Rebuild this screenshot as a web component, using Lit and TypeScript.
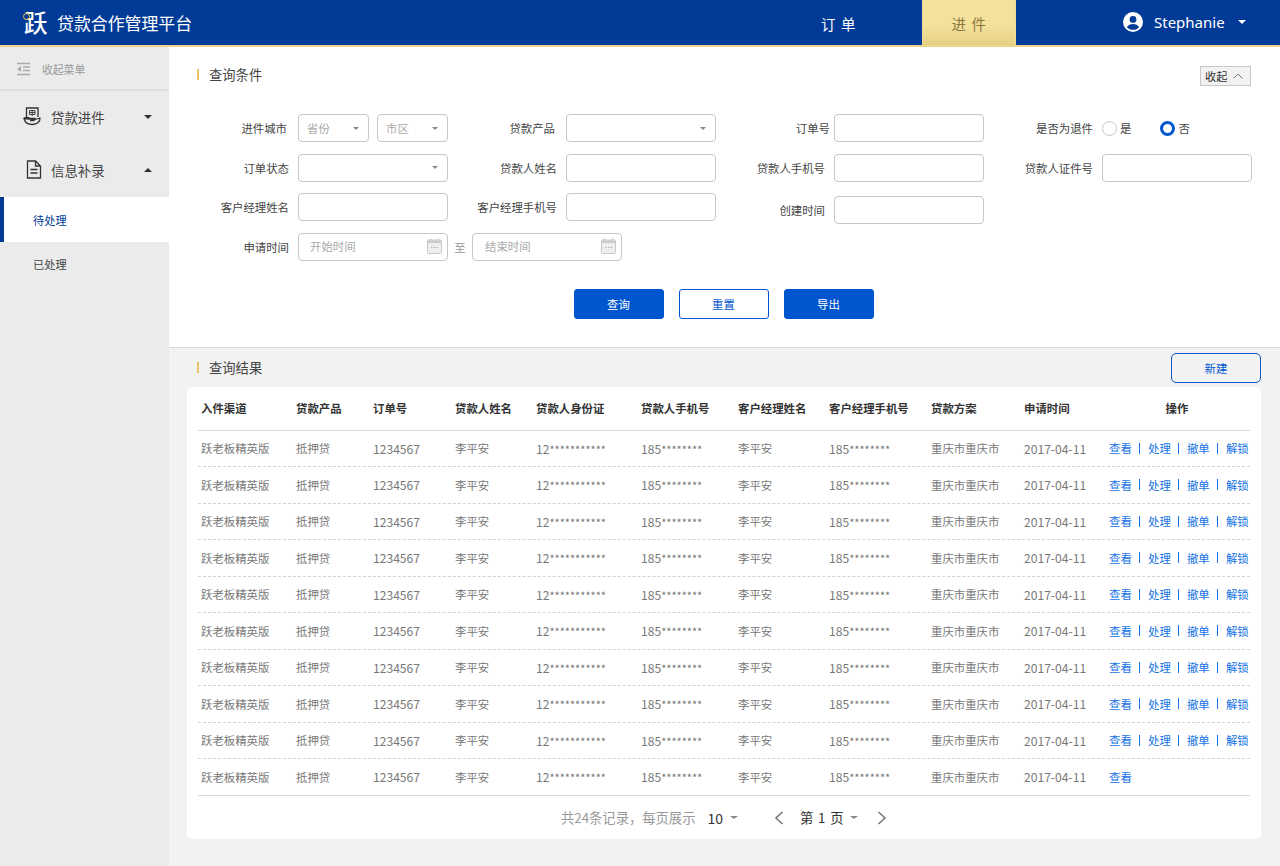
import { LitElement, html, css } from "lit";
import { customElement } from "lit/decorators.js";

const caret = (cls = "caret") => html`<span class=${cls}></span>`;
const calendar = html`<svg class="cal" width="15" height="16" viewBox="0 0 15 16"><path d="M3.5 .5v3M11.5 .5v3" stroke="#c8c8c8" stroke-width="1.4" fill="none"/><rect x=".5" y="2" width="14" height="13.5" rx="1" fill="#eee" stroke="#c8c8c8"/><rect x="1" y="2.5" width="13" height="2.5" fill="#ccc"/><path d="M4 9.5h1.4M6.8 9.5h1.4M9.6 9.5h1.4" stroke="#aaa"/></svg>`;

const HEAD = ["入件渠道","贷款产品","订单号","贷款人姓名","贷款人身份证","贷款人手机号","客户经理姓名","客户经理手机号","贷款方案","申请时间"];
const ROW = ["跃老板精英版","抵押贷","1234567","李平安","12***********","185********","李平安","185********","重庆市重庆市","2017-04-11"];
const ROWS = Array.from({ length: 10 }, (_, i) => i);

@customElement("app-root")
export class AppRoot extends LitElement {
  static styles = css`
    :host { display: block; width: 1280px; height: 866px; overflow: hidden; font-family: "Noto Sans CJK SC", "Liberation Sans", sans-serif; font-size: 11.4px; color: #444; background: #f2f2f2; }
    * { box-sizing: border-box; }
    .top { height: 47px; background: #023b97; border-bottom: 2px solid #ecd589; display: flex; align-items: stretch; color: #fff; }
    .brand { display: flex; align-items: center; width: 755px; padding-left: 24px; flex: none; }
    .logo { position: relative; font-size: 23.5px; line-height: 45px; width: 33px; font-weight: 500; }
    .logo i { position: absolute; left: -1px; top: 13px; width: 7px; height: 7px; border: 1.6px solid #f5c552; border-radius: 50%; background: #023b97; }
    .title { font-size: 16.9px; line-height: 45px; }
    .nav { width: 167px; flex: none; font-size: 14.5px; letter-spacing: 5.5px; display: flex; align-items: center; justify-content: center; padding: 2px 0 0 5px; }
    .nav.on { width: 94px; background: linear-gradient(#f4e29b 55%, #e5cf85); color: #8c7440; border-left: 1px solid #f0dc95; border-right: 1px solid #f0dc95; }
    .user { display: flex; align-items: center; margin-left: 107px; font-family: "Noto Sans", sans-serif; font-size: 15px; padding-bottom: 1px; }
    .user svg { margin-right: 11px; }
    .user .caret { margin-left: 13px; border-top-color: #fff; border-width: 4px 4.5px 0; }
    .body { display: flex; height: 819px; }
    .side { width: 169px; background: #ebebeb; flex: none; }
    .collapse { height: 44px; border-bottom: 2px solid #dedede; display: flex; align-items: center; padding-left: 17px; color: #999; font-size: 10.8px; gap: 11px; padding-top: 1px; }
    .mi { height: 53px; display: flex; align-items: center; padding: 0 17px 2px 23px; font-size: 13.4px; color: #444; }
    .mi svg { margin-right: 9px; flex: none; }
    .mi .doc { margin-left: 2px; margin-right: 7px; }
    .mi .caret { margin-left: auto; border-top-color: #333; }
    .mi .caret.up { margin-left: auto; border-top: 0; border-bottom: 4px solid #333; }
    .caret { display: inline-block; width: 0; height: 0; border-style: solid; border-width: 4px 4px 0; border-color: #888 transparent transparent; }
    .caret.up { border-width: 0 4px 4px; border-color: transparent transparent #333; }
    .sub { height: 44.5px; display: flex; align-items: center; padding-left: 33px; font-size: 11.2px; color: #444; }
    .sub.on { height: 45px; background: #fff; color: #023b97; border-left: 4px solid #023b97; padding-left: 29px; }
    .main { flex: 1; min-width: 0; }
    .search { height: 301px; background: #fff; border-bottom: 1px solid #d9d9d9; padding: 0 29px 0 11px; }
    .sec { display: flex; align-items: center; font-size: 13.3px; color: #444; }
    .sec::before { content: ""; width: 2px; height: 11px; background: #e8c36a; margin-right: 10px; }
    .search-head { display: flex; justify-content: space-between; align-items: center; height: 54px; padding-left: 17px; }
    .fold { width: 51px; height: 20px; margin-top: 4px; background: #f2f2f2; border: 1px solid #c8c8c8; display: flex; align-items: center; font-size: 11.2px; padding-left: 4px; gap: 6px; color: #333; }
    .form { display: grid; grid-template-columns: repeat(4, 118px 150px); row-gap: 11.5px; margin-top: 13px; grid-auto-rows: 28px; align-items: center; }
    .lab { text-align: right; color: #444; white-space: nowrap; padding-right: 9px; }
    .lab.n2 { padding-right: 11px; }
    .lab.m5 { padding-right: 4px; }
    .fld { height: 28px; border: 1px solid #c6c6c6; border-radius: 4px; background: #fff; display: flex; align-items: center; color: #aaa; }
    .fld.sel { padding: 0 9px 0 8px; justify-content: space-between; }
    .fld .caret { margin-left: auto; border-width: 3.5px 3.5px 0; border-top-color: #888; }
    .pair { display: flex; gap: 8px; }
    .pair .fld { width: 71px; }
    .shift { position: relative; top: 3px; }
    .radio { display: flex; align-items: center; color: #444; }
    .rd { width: 15px; height: 15px; border-radius: 50%; border: 1px solid #c6c6c6; margin-right: 3px; background: #fff; }
    .rd.on { border: 3.5px solid #0056cf; }
    .radio .no { margin-left: 29px; }
    .dates { grid-column: 2 / span 3; display: flex; align-items: center; color: #999; }
    .date { width: 150px; padding: 0 5px 1px 12px; justify-content: space-between; }
    .date.first { padding-left: 11px; }
    .to { width: 24px; text-align: center; }
    .btns { display: flex; justify-content: center; gap: 15px; margin-top: 28px; padding-left: 16px; }
    .btn { width: 90px; height: 30px; border-radius: 3px; border: 1px solid #0056cf; background: #0056cf; color: #fff; display: flex; align-items: center; justify-content: center; font-size: 11.4px; }
    .btn.ghost { background: transparent; color: #0056cf; }
    .result { padding: 0 19px 0 18px; }
    .result-head { height: 39px; display: flex; align-items: center; justify-content: space-between; padding-left: 10px; }
    .new { width: 90px; height: 30px; border-width: 1.5px; border-radius: 5px; }
    .card { background: #fff; border-radius: 5px; height: 452px; padding: 0 11px; }
    .row { display: grid; grid-template-columns: 95px 77px 82px 81px 105px 97px 91px 102px 93px 85px 1fr; height: 36.5px; align-items: center; padding-left: 3px; border-bottom: 1px dashed #d2d2d2; color: #777; white-space: nowrap; }
    .row.h { height: 43.5px; border-bottom: 1px solid #d9d9d9; font-weight: 700; color: #333; }
    .row.h .op { text-align: center; padding-right: 5px; }
    .row.last { border-bottom: 1px solid #d9d9d9; }
    .num { font-size: 12.1px; }
    .stars { font-size: 11px; }
    .ops { color: #1572e4; display: flex; }
    .ops i { margin: 0 8.2px 0 7px; width: 1px; height: 11px; background: #1572e4; align-self: center; }
    .pager { display: flex; align-items: center; height: 44px; padding-left: 363px; color: #999; font-size: 13.3px; }
    .pager .n { color: #333; margin-left: 12px; font-size: 14px; }
    .pager .caret { margin-left: 7px; border-width: 3.5px 4px 0; }
    .pager svg { margin-left: 36px; }
    .pager .pg { color: #333; margin-left: 16px; letter-spacing: .9px; }
    .pager .pg + .caret { margin-left: 6px; }
    .pager svg.next { margin-left: 19px; }
  `;

  private cells() {
    return ROW.map((c) => {
      const m = c.match(/^(\d+)(\*+)$/);
      if (m) return html`<div class="num">${m[1]}<span class="stars">${m[2]}</span></div>`;
      return /^[\d-]+$/.test(c) ? html`<div class="num">${c}</div>` : html`<div>${c}</div>`;
    });
  }

  render() {
    return html`
      <div class="top">
        <div class="brand"><div class="logo">跃<i></i></div><div class="title">贷款合作管理平台</div></div>
        <div class="nav">订单</div>
        <div class="nav on">进件</div>
        <div class="user">
          <svg width="20" height="20" viewBox="0 0 20 20"><circle cx="10" cy="10" r="10" fill="#fff"/><circle cx="10" cy="7.4" r="3.4" fill="#023b97"/><path d="M3.9 15.2C5 12.6 7.4 11.9 10 11.9s5 .7 6.1 3.3C14.6 16.9 12.4 17.8 10 17.8s-4.6-.9-6.1-2.6z" fill="#023b97"/></svg>
          Stephanie${caret()}
        </div>
      </div>
      <div class="body">
        <aside class="side">
          <div class="collapse">
            <svg width="14" height="14" viewBox="0 0 14 14"><path d="M0 1.5h13M6 5h7M6 8.500h7M0 12.500h13" stroke="#aaa" stroke-width="1.4"/><path d="M4 4v6L0 7z" fill="#aaa"/></svg>
            收起菜单
          </div>
          <div class="mi">
            <svg width="19" height="19" viewBox="0 0 19 19" fill="none" stroke="#333" stroke-width="1.3"><path d="M3.500 10V1h11.500v9"/><path d="M1 11.500c2-1.300 4-1.300 6 0h5c0 1.300-1 2-2 2H7M12 12.500l5-1.500c.3 3.500-3 6.500-7.500 6.500C5 17.500 2 15.500 1 11.500z"/><path d="M6.500 3.500h5.500v4H6.500zM9.200 3v6M6.500 5.500h5.500" stroke-width=".9"/></svg>
            贷款进件${caret()}
          </div>
          <div class="mi">
            <svg class="doc" width="19" height="19" viewBox="0 0 19 19" fill="none" stroke="#333" stroke-width="1.3"><path d="M2.500 1h8l5 5v12h-13zM10.500 1v5h5"/><path d="M5.500 9.500h7M5.500 13h7"/></svg>
            信息补录${caret("caret up")}
          </div>
          <div>
            <div class="sub on">待处理</div>
            <div class="sub">已处理</div>
          </div>
        </aside>
        <main class="main">
          <section class="search">
            <div class="search-head"><div class="sec">查询条件</div>
              <div class="fold">收起<svg width="10" height="6" viewBox="0 0 10 6" fill="none" stroke="#777"><path d="M.5 5.500L5 1l4.500 4.500"/></svg></div>
            </div>
            <div class="form">
              <div class="lab n2">进件城市</div>
              <div class="pair"><div class="fld sel">省份${caret()}</div><div class="fld sel">市区${caret()}</div></div>
              <div class="lab n2">贷款产品</div><div class="fld sel">${caret()}</div>
              <div class="lab m5">订单号</div><div class="fld"></div>
              <div class="lab">是否为退件</div>
              <div class="radio"><span class="rd"></span>是<span class="rd on no"></span>否</div>

              <div class="lab">订单状态</div><div class="fld sel">${caret()}</div>
              <div class="lab">贷款人姓名</div><div class="fld"></div>
              <div class="lab">贷款人手机号</div><div class="fld"></div>
              <div class="lab">贷款人证件号</div><div class="fld"></div>

              <div class="lab">客户经理姓名</div><div class="fld"></div>
              <div class="lab">客户经理手机号</div><div class="fld"></div>
              <div class="lab shift">创建时间</div><div class="fld shift"></div>
              <div></div><div></div>

              <div class="lab">申请时间</div>
              <div class="dates">
                <div class="fld date first">开始时间${calendar}</div>
                <div class="to">至</div>
                <div class="fld date">结束时间${calendar}</div>
              </div>
            </div>
            <div class="btns"><div class="btn">查询</div><div class="btn ghost">重置</div><div class="btn">导出</div></div>
          </section>
          <section class="result">
            <div class="result-head"><div class="sec">查询结果</div><div class="btn ghost new">新建</div></div>
            <div class="card">
              <div class="row h">${HEAD.map((h) => html`<div>${h}</div>`)}<div class="op">操作</div></div>
              ${ROWS.map((i) => html`
                <div class="row ${i === 9 ? "last" : ""}">
                  ${this.cells()}
                  <div class="ops">
                    <span>查看</span>
                    ${i < 9 ? html`<i></i><span>处理</span><i></i><span>撤单</span><i></i><span>解锁</span>` : ""}
                  </div>
                </div>`)}
              <div class="pager">
                共24条记录，每页展示
                <span class="n">10</span>${caret()}
                <svg width="10" height="14" viewBox="0 0 10 14" fill="none" stroke="#777" stroke-width="1.6"><path d="M8.500 1L2 7l6.500 6"/></svg>
                <span class="pg">第 1 页</span>${caret()}
                <svg class="next" width="10" height="14" viewBox="0 0 10 14" fill="none" stroke="#777" stroke-width="1.6"><path d="M1.500 1L8 7l-6.500 6"/></svg>
              </div>
            </div>
          </section>
        </main>
      </div>
    `;
  }
}
